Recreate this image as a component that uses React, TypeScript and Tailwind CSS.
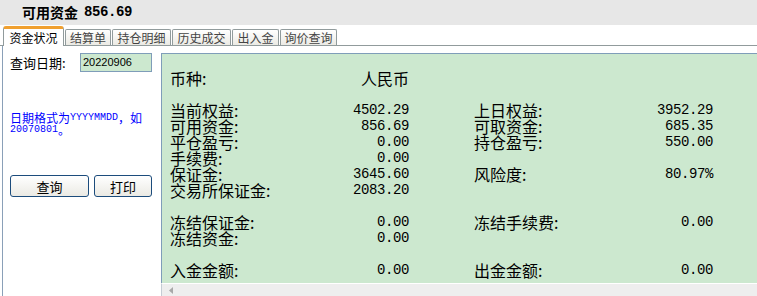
import React from "react";

const cjk = "font-['Noto_Sans_CJK_SC',sans-serif]";
const mono = "font-['Liberation_Mono',monospace]";

type Cell = { l?: string; v?: string; cjkv?: boolean } | null;

const rows: [Cell, Cell][] = [
  [{ l: "币种:", v: "人民币", cjkv: true }, null],
  [null, null],
  [{ l: "当前权益:", v: "4502.29" }, { l: "上日权益:", v: "3952.29" }],
  [{ l: "可用资金:", v: "856.69" }, { l: "可取资金:", v: "685.35" }],
  [{ l: "平仓盈亏:", v: "0.00" }, { l: "持仓盈亏:", v: "550.00" }],
  [{ l: "手续费:", v: "0.00" }, null],
  [{ l: "保证金:", v: "3645.60" }, { l: "风险度:", v: "80.97%" }],
  [{ l: "交易所保证金:", v: "2083.20" }, null],
  [null, null],
  [{ l: "冻结保证金:", v: "0.00" }, { l: "冻结手续费:", v: "0.00" }],
  [{ l: "冻结资金:", v: "0.00" }, null],
  [null, null],
  [{ l: "入金金额:", v: "0.00" }, { l: "出金金额:", v: "0.00" }],
];

function CellView({ c }: { c: Cell }) {
  return (
    <div className="h-[16px] flex items-center justify-between text-black">
      {c ? (
        <>
          <span className="text-[16px] leading-[16px]">{c.l}</span>
          {c.cjkv ? (
            <span className="text-[16px] leading-[16px]">{c.v}</span>
          ) : (
            <span className={`${mono} text-[14px] leading-[16px] tracking-[-0.4px]`}>{c.v}</span>
          )}
        </>
      ) : null}
    </div>
  );
}

const tabs = [
  { t: "结算单", w: "w-[46px]" },
  { t: "持仓明细", w: "w-[59px]" },
  { t: "历史成交", w: "w-[59px]" },
  { t: "出入金", w: "w-[47px]" },
  { t: "询价查询", w: "w-[57px]" },
];

export default function App() {
  return (
    <div className={`w-[757px] h-[296px] bg-white overflow-hidden flex flex-col ${cjk}`}>
      {/* title bar */}
      <div className="h-[25px] shrink-0 bg-[#e7e7e7] flex items-center pl-[22px] text-[14px] font-bold text-black">
        <span>可用资金</span>
        <span className={`${mono} text-[14px] tracking-[-0.4px] ml-[6px]`}>856.69</span>
      </div>

      {/* tabs */}
      <div className="h-[21px] shrink-0 flex items-end pl-[3px] border-b border-[#919b9c]">
        <div className="w-[61px] h-[20px] -mb-[1px] bg-white border-x border-[#919b9c] border-t-[3px] border-t-[#f0a030] rounded-t-[3px] flex items-center justify-center text-[12px] leading-[12px] text-black">
          资金状况
        </div>
        {tabs.map((t) => (
          <div
            key={t.t}
            className={`${t.w} ml-[1px] h-[16px] border border-b-0 border-[#919b9c] rounded-t-[2px] bg-gradient-to-b from-white to-[#ebeae4] flex items-center justify-center text-[12px] leading-[12px] text-[#444]`}
          >
            {t.t}
          </div>
        ))}
      </div>

      {/* body */}
      <div className="flex flex-1 min-h-0">
        {/* left panel */}
        <div className="ml-[2px] w-[159px] shrink-0 border-l border-[#8aa0b8] flex flex-col pl-[7px]">
          <div className="mt-[7px] flex items-center h-[19px]">
            <span className="w-[70px] text-[13px] leading-[13px] text-black">查询日期:</span>
            <div className="w-[72px] h-[19px] bg-[#cce8cf] border border-[#7f9db9] flex items-center pl-[2px] font-['Liberation_Sans',sans-serif] text-[11px] text-black">
              20220906
            </div>
          </div>
          <div className="mt-[39px] text-[12px] leading-[11px] text-[#0000ff]">
            <div className="h-[12px] flex items-center whitespace-nowrap">
              <span>日期格式为</span>
              <span className={`${mono} text-[10px]`}>YYYYMMDD</span>
              <span>，如</span>
            </div>
            <div className="h-[12px] flex items-center whitespace-nowrap">
              <span className={`${mono} text-[10px]`}>20070801</span>
              <span>。</span>
            </div>
          </div>
          <div className="mt-[40px] flex gap-[5px]">
            <button className="w-[79px] h-[22px] border border-[#1c4c7c] rounded-[3px] bg-gradient-to-b from-white to-[#ebeae4] text-[13px] leading-[13px] text-black flex items-center justify-center">
              查询
            </button>
            <button className="w-[58px] h-[22px] border border-[#1c4c7c] rounded-[3px] bg-gradient-to-b from-white to-[#ebeae4] text-[13px] leading-[13px] text-black flex items-center justify-center">
              打印
            </button>
          </div>
        </div>

        {/* right panel */}
        <div className="flex-1 flex flex-col pt-[7px]">
          <div className="flex-1 bg-[#cce8cf] border-t border-l border-[#7f9db9] pl-[8px] pt-[16px]">
            <div className="grid grid-cols-[239px_239px] gap-x-[65px]">
              {rows.map((r, i) => (
                <React.Fragment key={i}>
                  <CellView c={r[0]} />
                  <CellView c={r[1]} />
                </React.Fragment>
              ))}
            </div>
          </div>
          <div className="h-[13px] shrink-0 bg-[#eeeeee] border-t border-white border-l border-l-[#c4ccd4] flex items-center pl-[7px]">
            <svg width="4" height="7" viewBox="0 0 4 7">
              <path d="M4 0 L0 3.5 L4 7 Z" fill="#a8a8a8" />
            </svg>
          </div>
        </div>
      </div>
    </div>
  );
}
